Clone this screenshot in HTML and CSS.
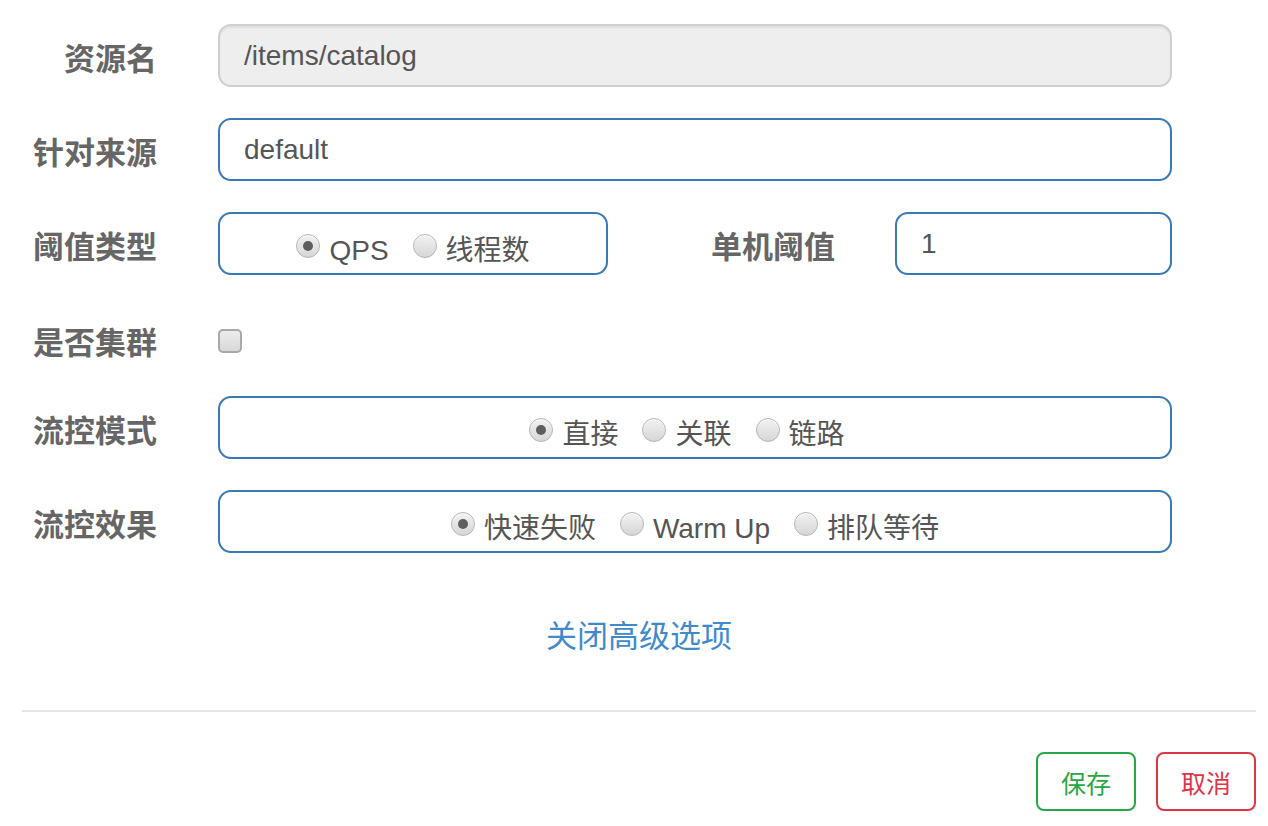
FILE: index.html
```html
<!DOCTYPE html>
<html lang="zh">
<head>
<meta charset="utf-8">
<title>流控规则</title>
<link rel="stylesheet" href="styles.css">
</head>
<body>
<div class="modal-body">
  <form class="form">
    <div class="row">
      <label class="label">资源名</label>
      <input class="field input disabled" type="text" value="/items/catalog" disabled>
    </div>
    <div class="row">
      <label class="label">针对来源</label>
      <input class="field input" type="text" value="default">
    </div>
    <div class="row">
      <label class="label">阈值类型</label>
      <div class="field radio-box narrow">
        <label class="radio"><input type="radio" name="grade" checked><span>QPS</span></label>
        <label class="radio"><input type="radio" name="grade"><span>线程数</span></label>
      </div>
      <label class="label label2">单机阈值</label>
      <input class="field input short" type="text" value="1">
    </div>
    <div class="row row-check">
      <label class="label">是否集群</label>
      <input class="check" type="checkbox">
    </div>
    <div class="row">
      <label class="label">流控模式</label>
      <div class="field radio-box trail">
        <label class="radio"><input type="radio" name="mode" checked><span>直接</span></label>
        <label class="radio"><input type="radio" name="mode"><span>关联</span></label>
        <label class="radio"><input type="radio" name="mode"><span>链路</span></label>
      </div>
    </div>
    <div class="row last">
      <label class="label">流控效果</label>
      <div class="field radio-box">
        <label class="radio"><input type="radio" name="effect" checked><span>快速失败</span></label>
        <label class="radio"><input type="radio" name="effect"><span>Warm Up</span></label>
        <label class="radio"><input type="radio" name="effect"><span>排队等待</span></label>
      </div>
    </div>
    <div class="advanced"><a class="link" href="#">关闭高级选项</a></div>
  </form>
  <div class="divider"></div>
  <div class="footer">
    <button class="btn btn-save" type="button">保存</button>
    <button class="btn btn-cancel" type="button">取消</button>
  </div>
</div>
</body>
</html>
```
FILE: styles.css
```css
html, body {
  margin: 0;
  padding: 0;
  background: #fff;
}
body {
  font-family: "Liberation Sans", "Noto Sans CJK SC", sans-serif;
  color: #555;
}
.modal-body {
  padding: 24px 12px 0 22px;
}
.form {
  width: 1234px;
}
.row {
  display: flex;
  align-items: center;
  height: 63px;
  margin-bottom: 31px;
}
.row.last {
  margin-bottom: 0;
}
.row-check {
  height: 59px;
}
.label {
  width: 135px;
  flex: none;
  margin-right: 61px;
  text-align: right;
  font-size: 31px;
  font-weight: bold;
  color: #666;
  line-height: 40px;
  padding-top: 8px;
  box-sizing: border-box;
}
.row-check .label {
  padding-top: 16px;
}
.label2 {
  width: 227px;
  margin-right: 60px;
}
.field {
  box-sizing: border-box;
  width: 954px;
  height: 63px;
  border: 2px solid #3a78b6;
  border-radius: 13px;
  background: #fff;
  flex: none;
}
.input {
  font-family: "Liberation Sans", "Noto Sans CJK SC", sans-serif;
  font-size: 28px;
  color: #555;
  padding: 0 24px;
  outline: none;
}
.input.disabled {
  background: #eeeeee;
  border-color: #cfcfcf;
  box-shadow: inset 0 2px 2px rgba(0,0,0,0.06);
  color: #555;
  -webkit-text-fill-color: #555;
  opacity: 1;
}
.input.short {
  width: 277px;
}
.radio-box {
  display: flex;
  justify-content: center;
  align-items: center;
  padding-top: 5px;
}
.radio-box.narrow {
  width: 390px;
}
.radio-box.trail {
  padding-right: 16px;
}
.radio {
  display: flex;
  align-items: center;
  margin: 0 12px;
  font-size: 28px;
  color: #555;
  cursor: pointer;
}
.radio span {
  padding-top: 10px;
  line-height: 36px;
}
.radio input {
  -webkit-appearance: none;
  appearance: none;
  width: 24px;
  height: 24px;
  margin: 0 9px 0 0;
  border-radius: 50%;
  border: 1px solid #b5b5b5;
  background: linear-gradient(#f2f2f2, #d6d6d6);
  box-shadow: inset 0 1px 1px rgba(255,255,255,0.8);
  box-sizing: border-box;
  position: relative;
}
.radio input:checked::after {
  content: "";
  position: absolute;
  left: 6px;
  top: 6px;
  width: 10px;
  height: 10px;
  border-radius: 50%;
  background: #5e5e5e;
}
.check {
  -webkit-appearance: none;
  appearance: none;
  width: 24px;
  height: 24px;
  margin: 11px 0 0 0;
  border: 2px solid #a9a9a9;
  border-radius: 5px;
  background: linear-gradient(#ececec, #d8d8d8);
  box-sizing: border-box;
}
.advanced {
  text-align: center;
  padding-top: 62px;
  line-height: 44px;
}
.link {
  font-size: 31px;
  color: #3f8acc;
  text-decoration: none;
}
.divider {
  margin-top: 46px;
  height: 2px;
  background: #e5e5e5;
  width: 1234px;
}
.footer {
  display: flex;
  justify-content: flex-end;
  gap: 20px;
  width: 1234px;
  padding-top: 40px;
}
.btn {
  width: 100px;
  height: 59px;
  box-sizing: border-box;
  border-radius: 8px;
  background: #fff;
  font-family: "Liberation Sans", "Noto Sans CJK SC", sans-serif;
  font-size: 25px;
  padding: 0;
  cursor: pointer;
}
.btn-save {
  border: 2px solid #28a745;
  color: #28a745;
}
.btn-cancel {
  border: 2px solid #dc3545;
  color: #dc3545;
}
```
